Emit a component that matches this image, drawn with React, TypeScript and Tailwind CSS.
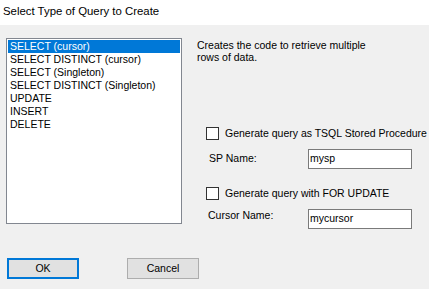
import { useState } from "react";

const items = [
  "SELECT (cursor)",
  "SELECT DISTINCT (cursor)",
  "SELECT (Singleton)",
  "SELECT DISTINCT (Singleton)",
  "UPDATE",
  "INSERT",
  "DELETE",
];

function CheckBox({ label }: { label: string }) {
  return (
    <div className="flex h-[13px] items-center">
      <div className="h-[13px] w-[13px] border border-[#333333] bg-white" />
      <span className="ml-[6px] whitespace-nowrap leading-[13px]">{label}</span>
    </div>
  );
}

export default function App() {
  const [selected, setSelected] = useState(0);

  return (
    <div
      className="flex h-[289px] w-[429px] flex-col overflow-hidden bg-[#f0f0f0] text-[10.5px] text-black"
      style={{ fontFamily: '"Liberation Sans", Arial, sans-serif' }}
    >
      {/* title bar */}
      <div className="h-[25px] bg-white pl-[3px] pt-[4px] text-[11.4px] leading-[14px]">
        Select Type of Query to Create
      </div>

      <div className="flex h-[204px] items-start">
        {/* query type list */}
        <div className="ml-[6px] mt-[13px] h-[186px] w-[176px] border border-[#828790] bg-white p-[1px]">
          {items.map((item, i) => (
            <div
              key={item}
              onClick={() => setSelected(i)}
              className={
                i === selected
                  ? "h-[13px] bg-[#0078d7] pl-[2px] leading-[13px] text-white"
                  : "h-[13px] pl-[2px] leading-[13px]"
              }
            >
              {item}
            </div>
          ))}
        </div>

        <div className="ml-[15px] mt-[14px] flex flex-col">
          <p className="leading-[12px]">
            Creates the code to retrieve multiple
            <br />
            rows of data.
          </p>

          <div className="ml-[9px] mt-[64px] flex flex-col">
            <CheckBox label="Generate query as TSQL Stored Procedure" />
            <div className="mt-[9px] flex h-[20px] items-center">
              <span className="ml-[3px] w-[99px]">SP Name:</span>
              <div className="flex h-[20px] w-[104px] items-center border border-[#7a7a7a] bg-white pl-[1px]">
                mysp
              </div>
            </div>

            <div className="mt-[18px]">
              <CheckBox label="Generate query with FOR UPDATE" />
            </div>
            <div className="mt-[9px] flex h-[20px] items-start">
              <span className="ml-[2px] w-[100px] leading-[12px]">Cursor Name:</span>
              <div className="flex h-[20px] w-[104px] items-center border border-[#7a7a7a] bg-white pl-[1px]">
                mycursor
              </div>
            </div>
          </div>
        </div>
      </div>

      {/* buttons */}
      <div className="mt-[29px] flex">
        <button className="ml-[7px] h-[21px] w-[72px] border-2 border-[#0078d7] bg-[#e1e1e1] leading-[17px]">
          OK
        </button>
        <button className="ml-[48px] h-[21px] w-[72px] border border-[#adadad] bg-[#e1e1e1] leading-[19px]">
          Cancel
        </button>
      </div>
    </div>
  );
}
